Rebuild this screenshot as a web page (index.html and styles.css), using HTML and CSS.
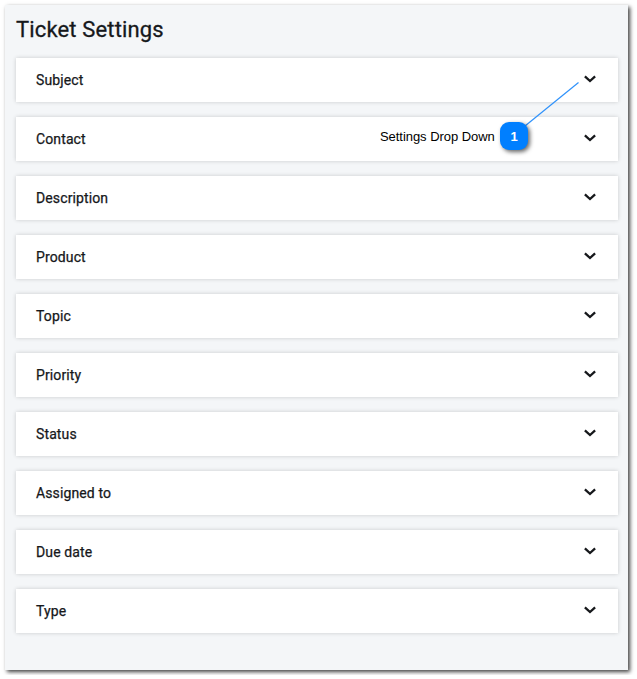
FILE: index.html
```html
<!DOCTYPE html>
<html lang="en">
<head>
<meta charset="utf-8">
<title>Ticket Settings</title>
<link rel="stylesheet" href="styles.css">
</head>
<body>
<svg class="defs" width="0" height="0"><symbol id="chevron" viewBox="0 0 12 8"><path d="M.9 1.3 6 6l5.1-4.7" fill="none" stroke="currentColor" stroke-width="2.3"/></symbol></svg>
<main class="panel">
  <h1 class="title">Ticket Settings</h1>
  <div class="list">
    <section class="card"><span>Subject</span><svg class="chevron"><use href="#chevron"/></svg></section>
    <section class="card"><span>Contact</span><svg class="chevron"><use href="#chevron"/></svg></section>
    <section class="card"><span>Description</span><svg class="chevron"><use href="#chevron"/></svg></section>
    <section class="card"><span>Product</span><svg class="chevron"><use href="#chevron"/></svg></section>
    <section class="card"><span>Topic</span><svg class="chevron"><use href="#chevron"/></svg></section>
    <section class="card"><span>Priority</span><svg class="chevron"><use href="#chevron"/></svg></section>
    <section class="card"><span>Status</span><svg class="chevron"><use href="#chevron"/></svg></section>
    <section class="card"><span>Assigned to</span><svg class="chevron"><use href="#chevron"/></svg></section>
    <section class="card"><span>Due date</span><svg class="chevron"><use href="#chevron"/></svg></section>
    <section class="card"><span>Type</span><svg class="chevron"><use href="#chevron"/></svg></section>
  </div>
</main>
<svg class="leader" viewBox="0 0 60 50"><path d="M5 46 58.5 2.5" stroke="#2f92fb" stroke-width="1.2"/></svg>
<div class="callout"><span class="callout-text">Settings Drop Down</span><span class="badge">1</span></div>
</body>
</html>
```

FILE: styles.css
```css
* { box-sizing: border-box; }
body {
  margin: 0;
  padding: 5px;
  background: #fff;
  color: #16181b;
  font-family: Roboto, sans-serif;
  overflow: hidden;
}
.defs { position: absolute; }
.panel {
  width: 623px;
  height: 665px;
  padding: 9px 10px 0 11px;
  background: #f4f6f8;
  box-shadow: 2px 2px 4px rgba(0, 0, 0, .75);
}
.title {
  margin: 0;
  height: 44px;
  font-size: 22px;
  line-height: 31px;
  font-weight: 400;
  letter-spacing: .15px;
  -webkit-text-stroke: .3px;
}
.list { display: flex; flex-direction: column; gap: 15px; }
.card {
  display: flex;
  align-items: center;
  justify-content: space-between;
  height: 44px;
  padding: 0 22px 0 20px;
  background: #fff;
  box-shadow: 0 0 4px rgba(0, 0, 0, .18);
  font-size: 14px;
  font-weight: 400;
  letter-spacing: .12px;
  -webkit-text-stroke: .25px;
}
.chevron { width: 12px; height: 8px; margin-top: -2px; }
.leader { position: absolute; left: 520px; top: 80px; width: 60px; height: 50px; }
.callout {
  position: absolute;
  left: 380px;
  top: 122px;
  display: flex;
  align-items: center;
  gap: 5px;
  color: #000;
  font: 13px "Liberation Sans", sans-serif;
}
.callout-text { width: 115px; white-space: nowrap; letter-spacing: -.05px; }
.badge {
  width: 28px;
  height: 28px;
  border-radius: 9px;
  background: #007fff;
  box-shadow: 2px 2px 4px rgba(0, 0, 0, .6);
  color: #fff;
  font-weight: 700;
  line-height: 29px;
  text-align: center;
}
```
